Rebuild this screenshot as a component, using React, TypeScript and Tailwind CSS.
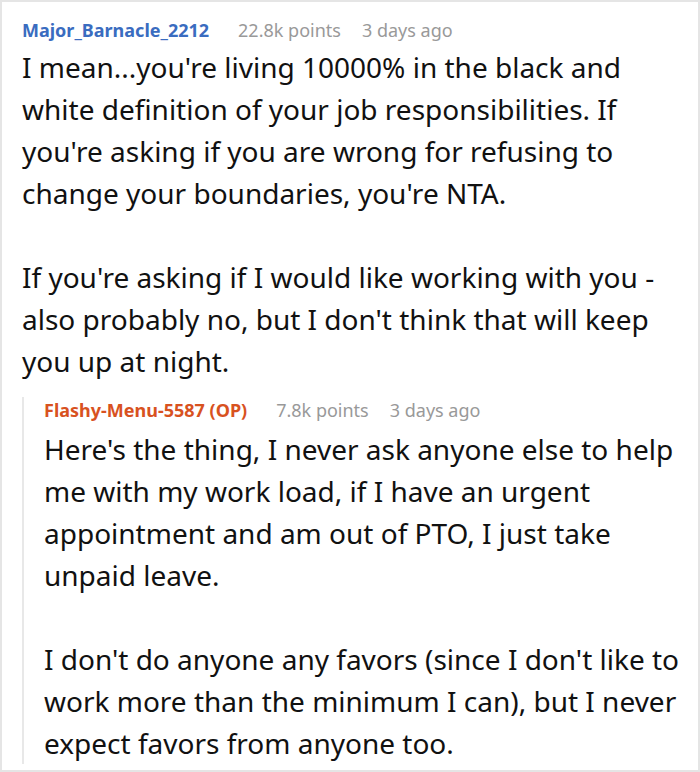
import React from "react";

const font = { fontFamily: '"Noto Sans", "Open Sans", sans-serif' };

export default function App() {
  return (
    <div className="w-[700px] h-[772px] bg-white border-2 border-[#e5e5e5] overflow-hidden" style={font}>
      <div className="pl-[20px] pr-[8px] pt-[15px]">
        <div className="flex items-baseline gap-[29px] text-[18px] leading-[26px]">
          <span className="font-bold text-[#3a6cc0]">Major_Barnacle_2212</span>
          <span className="flex gap-[21px] text-[#999999]">
            <span>22.8k points</span>
            <span>3 days ago</span>
          </span>
        </div>
        <div className="mt-[3px] text-[28px] leading-[42px] text-[#111111]">
          <p>I mean...you're living 10000% in the black and white definition of your job responsibilities. If you're asking if you are wrong for refusing to change your boundaries, you're NTA.</p>
          <p className="mt-[42px]">If you're asking if I would like working with you - also probably no, but I don't think that will keep you up at night.</p>
        </div>
        <div className="mt-[15px] border-l-2 border-[#e8e8e8] pl-[20px]">
          <div className="flex items-baseline gap-[29px] text-[18px] leading-[26px]">
            <span className="font-bold text-[#d8521f]">Flashy-Menu-5587 (OP)</span>
            <span className="flex gap-[21px] text-[#999999]">
              <span>7.8k points</span>
              <span>3 days ago</span>
            </span>
          </div>
          <div className="mt-[5px] text-[28px] leading-[42px] text-[#111111]">
            <p>Here's the thing, I never ask anyone else to help me with my work load, if I have an urgent appointment and am out of PTO, I just take unpaid leave.</p>
            <p className="mt-[42px]">I don't do anyone any favors (since I don't like to work more than the minimum I can), but I never expect favors from anyone too.</p>
          </div>
        </div>
      </div>
    </div>
  );
}
